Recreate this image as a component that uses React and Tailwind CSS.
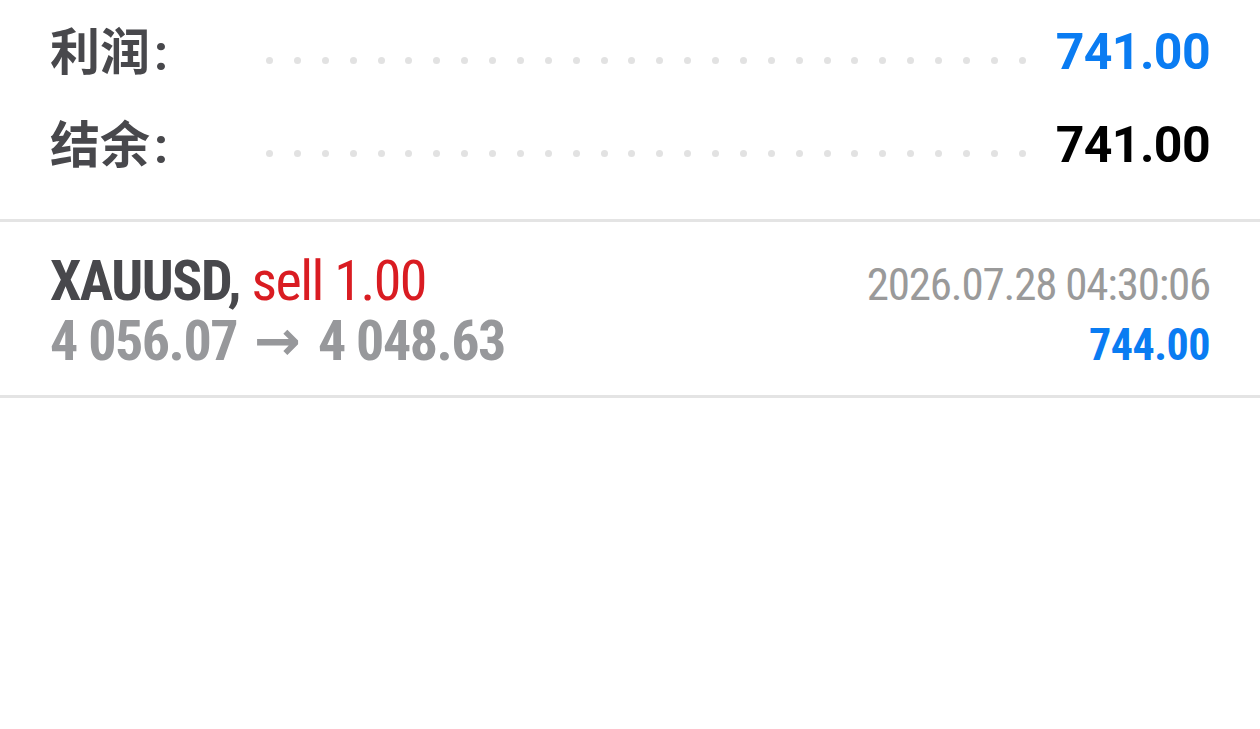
import React from "react";

const DOTS = Array.from({ length: 28 });

function Leader() {
  return (
    <div className="flex-1 self-start mt-[31px] mr-[30px] flex justify-between">
      {DOTS.map((_, i) => (
        <span key={i} className="block w-[7px] h-[7px] rounded-full bg-[#e2e2e2]" />
      ))}
    </div>
  );
}

function SummaryRow({ label, value, valueClass }) {
  return (
    <div className="flex h-[52px] leading-[52px]">
      <div
        className="w-[216px] -mt-[4px] text-[50px] font-bold text-[#48484c]"
        style={{ fontFamily: '"Noto Sans CJK SC", Roboto, sans-serif' }}
      >
        {label}
        <span className="font-[Roboto] ml-[4px]">:</span>
      </div>
      <Leader />
      <div className={`text-[50px] font-bold font-[Roboto] tracking-[-0.6px] ${valueClass}`}>{value}</div>
    </div>
  );
}

export default function App() {
  return (
    <div className="w-[1260px] h-[729px] bg-white overflow-hidden font-[Roboto]">
      <div className="px-[50px] pt-[26px] pb-[48px] flex flex-col gap-[41px]">
        <SummaryRow label="利润" value="741.00" valueClass="text-[#0a7cf2]" />
        <SummaryRow label="结余" value="741.00" valueClass="text-black" />
      </div>
      <div className="h-[3px] bg-[#e4e4e4]" />
      <div className="px-[50px] pt-[29px] pb-[24px] font-stretch-condensed">
        <div className="flex justify-between items-baseline h-[60px] leading-[60px]">
          <div className="text-[56px] tracking-[-1.5px]">
            <span className="font-bold text-[#48484c]">XAUUSD, </span>
            <span className="text-[#d91c22]">sell 1.00</span>
          </div>
          <div className="text-[45px] tracking-[-1.2px] text-[#9a9a9a]">2026.07.28 04:30:06</div>
        </div>
        <div className="flex justify-between items-baseline h-[60px] leading-[60px]">
          <div className="text-[56px] font-bold tracking-[-1.5px] text-[#97989b]">
            4 056.07
            <span className="font-['DejaVu_Sans'] font-bold font-stretch-normal tracking-normal mx-[17px]">→</span>
            4 048.63
          </div>
          <div className="text-[44px] font-bold tracking-[-0.5px] text-[#0a7cf2]">744.00</div>
        </div>
      </div>
      <div className="h-[3px] bg-[#e4e4e4]" />
    </div>
  );
}
